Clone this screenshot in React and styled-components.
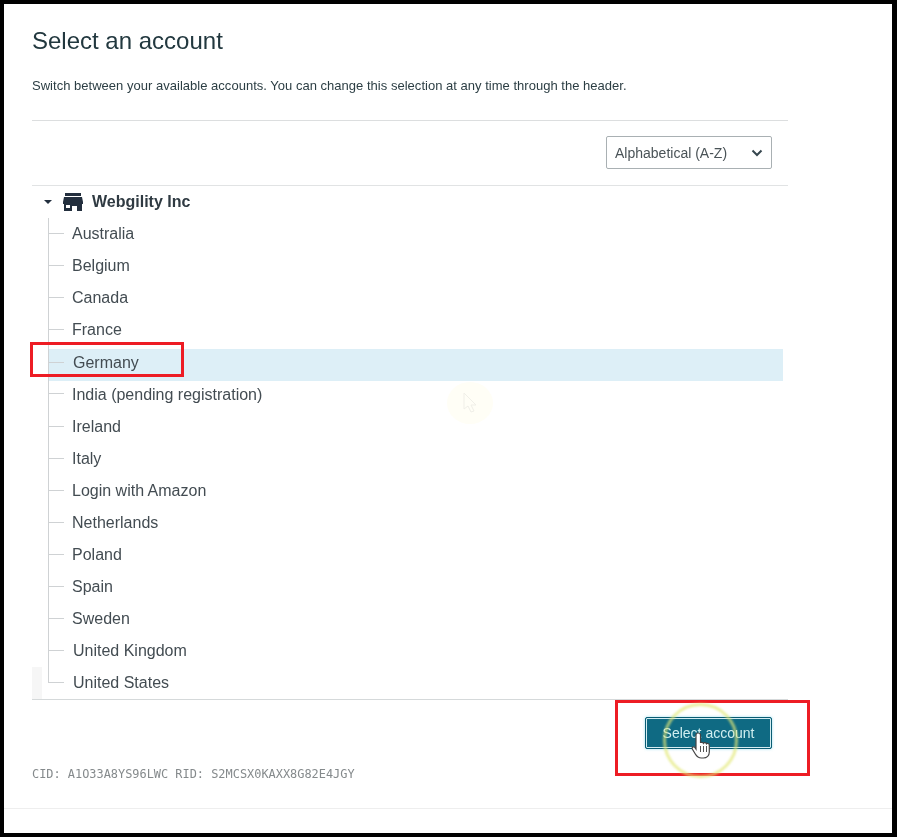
import styled, { createGlobalStyle } from "styled-components";

const accounts = [
  { name: "Australia" },
  { name: "Belgium" },
  { name: "Canada" },
  { name: "France" },
  { name: "Germany", selected: true, indent: 41 },
  { name: "India (pending registration)" },
  { name: "Ireland" },
  { name: "Italy" },
  { name: "Login with Amazon" },
  { name: "Netherlands" },
  { name: "Poland" },
  { name: "Spain" },
  { name: "Sweden" },
  { name: "United Kingdom", indent: 41 },
  { name: "United States", indent: 41 },
];

const App = () => {
  return (
    <>
      <GlobalStyle />
      <Frame>
        <Content>
          <Title>Select an account</Title>
          <Intro>
            Switch between your available accounts. You can change this selection at any time
            through the header.
          </Intro>
          <Rule />
          <SortBar>
            <SortSelect>
              <span>Alphabetical (A-Z)</span>
              <svg width="12" height="8" viewBox="0 0 12 8" fill="none">
                <path d="M1.5 1.5 6 6l4.5-4.5" stroke="#37474f" strokeWidth="2" />
              </svg>
            </SortSelect>
          </SortBar>
          <TreeBox>
            <TreeHead>
              <Caret />
              <svg width="20" height="18" viewBox="0 0 20 18">
                <path
                  d="M2 0h16v3H2zM1 4h18l1 5v2h-1v7h-5v-5H9v5H1v-7H0V9zM3 12v3h4v-3z"
                  fill="#232f3e"
                  fillRule="evenodd"
                />
              </svg>
              <OrgName>Webgility Inc</OrgName>
            </TreeHead>
            <TreeList>
              {accounts.map((account, index) => (
                <TreeRow
                  key={account.name}
                  $selected={account.selected}
                  $indent={account.indent || 40}
                  $last={index === accounts.length - 1}
                >
                  {account.selected && <RowBand />}
                  <RowLabel>{account.name}</RowLabel>
                </TreeRow>
              ))}
            </TreeList>
            <ScrollStub />
          </TreeBox>
          <Actions>
            <SelectButton>Select account</SelectButton>
          </Actions>
          <Ids>CID: A1O33A8YS96LWC RID: S2MCSX0KAXX8G82E4JGY</Ids>
        </Content>
        <Footer />

        <Highlight $left={26} $top={338} $width={154} $height={35} />
        <Highlight $left={611} $top={696} $width={195} $height={76} />
        <GhostGlow>
          <svg width="14" height="22" viewBox="0 0 14 22" fill="none">
            <path d="M1 1v16l4-3 3 6 3-1-3-6h5z" stroke="#f0efe8" strokeWidth="1" />
          </svg>
        </GhostGlow>
        <ClickRing />
        <HandCursor width="24" height="30" viewBox="0 0 24 30">
          <path
            d="M8 2c1.300 0 2.500.9 2.500 2v8c.2-1 2.500-1 3 .3.500-1 2.600-.8 3 .5.600-.8 2.600-.5 2.800 1.200V21c0 3.500-2.500 6-6 6h-2c-3 0-4.500-1.500-6-4l-3-5c-.8-1.500 1.200-3 2.500-1.700L6 18V4c0-1.100.7-2 2-2z"
            fill="#fff"
            stroke="#444"
            strokeWidth="1.200"
          />
          <path d="M10.500 15v6M13.500 15v6M16.500 15v6" stroke="#555" strokeWidth="1" />
        </HandCursor>
      </Frame>
    </>
  );
};

export default App;

/* Styled Components */
const GlobalStyle = createGlobalStyle`
  html, body {
    margin: 0;
    padding: 0;
    background: #000;
  }
`;

const Frame = styled.div`
  position: relative;
  box-sizing: border-box;
  width: 897px;
  height: 837px;
  border-style: solid;
  border-color: #000;
  border-width: 4px 5px 4px 4px;
  background: #fff;
  overflow: hidden;
  display: flex;
  flex-direction: column;
  font-family: "Liberation Sans", Arial, sans-serif;
`;

/* the reference is a video still, so everything is a touch soft */
const Content = styled.div`
  width: 756px;
  padding: 0 0 0 28px;
  height: 804px;
  display: flex;
  flex-direction: column;
  filter: blur(0.35px);
`;

const Title = styled.h1`
  margin: 22px 0 0;
  font-size: 24px;
  line-height: 30px;
  font-weight: 400;
  color: #22383f;
`;

const Intro = styled.p`
  margin: 22px 0 0;
  font-size: 13px;
  line-height: 16px;
  letter-spacing: 0.02px;
  color: #2c3e44;
`;

const Rule = styled.div`
  height: 1px;
  margin-top: 26px;
  background: #dcdedf;
`;

const SortBar = styled.div`
  height: 65px;
  display: flex;
  align-items: flex-start;
  justify-content: flex-end;
  padding: 15px 16px 0 0;
  box-sizing: border-box;
  border-bottom: 1px solid #e1e3e4;
`;

const SortSelect = styled.div`
  box-sizing: border-box;
  width: 166px;
  height: 33px;
  display: flex;
  align-items: center;
  justify-content: space-between;
  padding: 0 8px 0 8px;
  border: 1px solid #a9b0b3;
  border-radius: 2px;
  font-size: 14px;
  color: #4a5357;
`;

const TreeBox = styled.div`
  position: relative;
  border-bottom: 1px solid #d5d9da;
`;

const TreeHead = styled.div`
  height: 32px;
  display: flex;
  align-items: center;
  padding-left: 12px;
  svg {
    margin-left: 11px;
  }
`;

const Caret = styled.span`
  width: 0;
  height: 0;
  border-left: 4px solid transparent;
  border-right: 4px solid transparent;
  border-top: 4px solid #232f3e;
`;

const OrgName = styled.span`
  margin-left: 9px;
  font-size: 16px;
  font-weight: 700;
  color: #2f3a42;
`;

const TreeList = styled.ul`
  list-style: none;
  margin: 0;
  padding: 0;
`;

const TreeRow = styled.li`
  position: relative;
  box-sizing: border-box;
  height: 32.1px;
  display: flex;
  align-items: center;
  padding-left: ${(props) => props.$indent}px;
  padding-top: ${(props) => (props.$selected ? "2px" : "0")};
  width: 751px;

  /* tree guide lines */
  &::before {
    content: "";
    position: absolute;
    left: 16px;
    top: 0;
    width: 1px;
    height: ${(props) => (props.$last ? "15px" : "100%")};
    background: #cfd2d4;
  }
  &::after {
    content: "";
    position: absolute;
    left: 16px;
    top: ${(props) => (props.$selected ? "16px" : "15px")};
    width: 16px;
    height: 1px;
    background: #cfd2d4;
  }
`;

/* sits lower than the row, the selection band is offset in the reference */
const RowBand = styled.div`
  position: absolute;
  left: 17px;
  right: 0;
  top: 3px;
  height: 32px;
  background: rgba(170, 215, 235, 0.4);
`;

const RowLabel = styled.span`
  position: relative;
  font-size: 16px;
  color: #434c52;
`;

const ScrollStub = styled.div`
  position: absolute;
  left: 0;
  bottom: 0;
  width: 10px;
  height: 32px;
  background: #f6f6f6;
`;

const Actions = styled.div`
  display: flex;
  justify-content: flex-end;
  padding: 17px 16px 0 0;
`;

const SelectButton = styled.button`
  box-sizing: border-box;
  width: 127px;
  height: 32px;
  padding: 0;
  border: 1px solid #0a5c73;
  border-radius: 2px;
  outline: 1px solid #d4edf2;
  outline-offset: -2px;
  background: #0f6a83;
  box-shadow: 0 0 3px rgba(120, 210, 235, 0.7);
  color: #cfeef0;
  font-family: inherit;
  font-size: 14px;
`;

const Ids = styled.div`
  margin-top: 18px;
  font-family: "DejaVu Sans Mono", "Liberation Mono", monospace;
  font-size: 11.920px;
  line-height: 14px;
  color: #858a8c;
`;

const Footer = styled.div`
  height: 1px;
  background: #eeeeee;
`;

const Highlight = styled.div`
  position: absolute;
  box-sizing: border-box;
  left: ${(props) => props.$left}px;
  top: ${(props) => props.$top}px;
  width: ${(props) => props.$width}px;
  height: ${(props) => props.$height}px;
  border: 3px solid #ed1c24;
`;

const GhostGlow = styled.div`
  position: absolute;
  left: 443px;
  top: 378px;
  width: 46px;
  height: 42px;
  border-radius: 50%;
  background: #fffef6;
  display: flex;
  align-items: center;
  justify-content: center;
`;

const ClickRing = styled.div`
  position: absolute;
  box-sizing: border-box;
  left: 659px;
  top: 699px;
  width: 75px;
  height: 75px;
  border-radius: 50%;
  border: 3px solid rgba(226, 232, 120, 0.7);
  filter: blur(0.8px);
`;

const HandCursor = styled.svg`
  position: absolute;
  left: 686px;
  top: 727px;
`;
